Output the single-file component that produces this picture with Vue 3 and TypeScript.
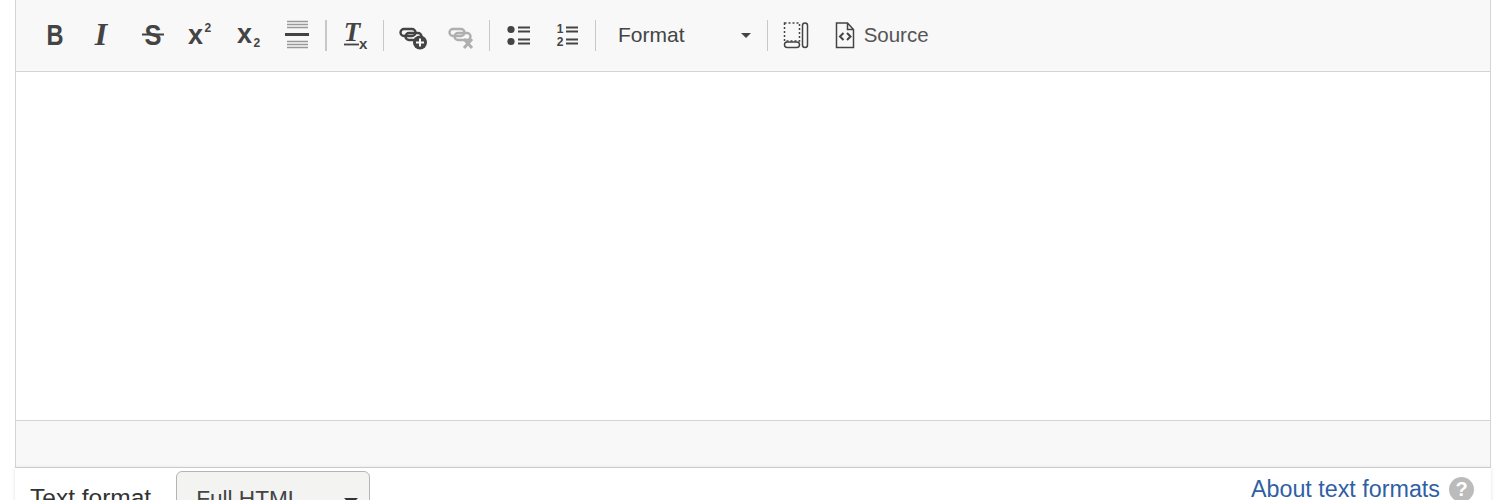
<script setup lang="ts">
const groupOne = ['bold', 'italic', 'strike', 'sup', 'sub', 'hr']
const linkButtons = ['link', 'unlink']
const listButtons = ['ul', 'ol']
</script>

<template>
  <div class="page">
    <div class="editor">
      <div class="toolbar">
        <span v-for="name in groupOne" :key="name" class="btn">
          <svg viewBox="0 0 32 32" class="icon">
            <text v-if="name === 'bold'" x="16" y="25" text-anchor="middle" class="sans heavy" font-size="29" textLength="17" lengthAdjust="spacingAndGlyphs">B</text>
            <text v-if="name === 'italic'" x="13" y="25" text-anchor="middle" class="serif heavy slant" font-size="32">I</text>
            <template v-if="name === 'strike'">
              <text x="17" y="25" text-anchor="middle" class="sans heavy" font-size="29" textLength="17" lengthAdjust="spacingAndGlyphs">S</text>
              <path d="M6 14.5h22" class="line" stroke-width="2" />
            </template>
            <template v-if="name === 'sup'">
              <text x="4" y="23.5" class="sans heavy" font-size="28" textLength="15" lengthAdjust="spacingAndGlyphs">x</text>
              <text x="20.5" y="12" class="sans heavy" font-size="12">2</text>
            </template>
            <template v-if="name === 'sub'">
              <text x="4" y="22.5" class="sans heavy" font-size="28" textLength="15" lengthAdjust="spacingAndGlyphs">x</text>
              <text x="20.5" y="27" class="sans heavy" font-size="12">2</text>
            </template>
            <template v-if="name === 'hr'">
              <path d="M6 1.5h21M6 4.5h21M6 7.5h21M6 21.5h21M6 24.5h21M6 27.5h21" class="thin" />
              <path d="M4 14.5h24" class="line" stroke-width="3" />
            </template>
          </svg>
        </span>
        <span class="sep"></span>
        <span class="btn">
          <svg viewBox="0 0 32 32" class="icon">
            <text x="13" y="20.5" text-anchor="middle" class="serif heavy slant" font-size="27">T</text>
            <path d="M5 24.5h15" class="line" stroke-width="1.8" />
            <text x="20" y="29" class="sans heavy" font-size="15">x</text>
          </svg>
        </span>
        <span class="sep"></span>
        <span v-for="name in linkButtons" :key="name" class="btn">
          <svg viewBox="0 0 32 32" class="icon" :class="{ faded: name === 'unlink' }">
            <rect x="4.5" y="9" width="15" height="7" rx="3.5" class="chain" />
            <rect x="9.5" y="13" width="16" height="7" rx="3.5" class="chain" />
            <template v-if="name === 'link'">
              <circle cx="24" cy="22.5" r="7" class="dot" />
              <path d="M24 18.5v8M20 22.5h8" stroke="#f8f8f8" stroke-width="2" />
            </template>
            <path v-else d="M19 19l8 9M27 19l-8 9" class="line" stroke-width="3" />
          </svg>
        </span>
        <span class="sep"></span>
        <span v-for="name in listButtons" :key="name" class="btn">
          <svg viewBox="0 0 32 32" class="icon">
            <template v-if="name === 'ul'">
              <circle cx="9" cy="9.5" r="3.6" class="dot" />
              <circle cx="9" cy="21.5" r="3.6" class="dot" />
              <path d="M16 7.5h12M16 11.5h12M16 19.5h12M16 23.5h12" class="line" stroke-width="1.8" />
            </template>
            <template v-else>
              <text x="9" y="13" text-anchor="middle" class="sans heavy" font-size="12">1</text>
              <text x="9" y="26" text-anchor="middle" class="sans heavy" font-size="12">2</text>
              <path d="M15 7.5h12M15 11.5h12M15 19.5h12M15 23.5h12" class="line" stroke-width="1.8" />
            </template>
          </svg>
        </span>
        <span class="sep"></span>
        <span class="combo">
          <span>Format</span>
          <span class="caret"></span>
        </span>
        <span class="sep"></span>
        <span class="btn">
          <svg viewBox="0 0 32 32" class="icon">
            <rect x="4.5" y="3" width="15" height="18" fill="none" stroke="#444" stroke-width="1.5" stroke-dasharray="2 2" />
            <rect x="4.5" y="22" width="15" height="5.5" rx="2.7" class="outline" />
            <rect x="22.5" y="3" width="5" height="24.5" rx="2.5" class="outline" />
          </svg>
        </span>
        <span class="btn source">
          <svg viewBox="0 0 32 32" class="icon">
            <path d="M7.5 3h11l6 6.5v18h-17zM18.5 3v6.5h6" class="outline" />
            <path d="M14.5 13l-3.5 3.5 3.5 3.5M18 13l3.5 3.5-3.5 3.5" class="line" stroke-width="2" />
          </svg>
          <span>Source</span>
        </span>
      </div>
      <div class="content"></div>
      <div class="statusbar"></div>
    </div>
    <div class="filter">
      <div class="format">
        <label>Text format</label>
        <div class="select">
          <span>Full HTML</span>
          <span class="select-caret"></span>
        </div>
      </div>
      <div class="help">
        <a href="#">About text formats</a>
        <span class="help-icon">?</span>
      </div>
    </div>
  </div>
</template>

<style scoped>
.page {
  height: 500px;
  overflow: hidden;
  padding: 0 9px 0 15px;
  background: #fff;
  font-family: "Liberation Sans", Arial, sans-serif;
  color: #333;
}

.editor {
  border: solid #d4d4d4;
  border-width: 0 1.5px;
  background: #fff;
}

.toolbar {
  display: flex;
  align-items: center;
  height: 71px;
  padding-left: 15px;
  background: #f8f8f8;
  border-bottom: 1.5px solid #d4d4d4;
}

.btn {
  display: flex;
  flex: none;
  align-items: center;
  justify-content: center;
  width: 48.4px;
}

.icon {
  flex: none;
  width: 32px;
  height: 32px;
  overflow: visible;
}

.faded {
  opacity: 0.4;
}

.sans {
  font-family: "Liberation Sans", Arial, sans-serif;
  fill: #444;
}

.serif {
  font-family: "Liberation Serif", "Times New Roman", serif;
  fill: #444;
}

.heavy {
  font-weight: 700;
}

.slant {
  font-style: italic;
}

.line {
  fill: none;
  stroke: #444;
}

.thin {
  fill: none;
  stroke: #999;
  stroke-width: 1.5;
}

.chain,
.outline {
  fill: none;
  stroke: #444;
  stroke-width: 1.5;
}

.chain {
  stroke-width: 2.4;
}

.dot {
  fill: #444;
}

.sep {
  flex: none;
  width: 1.5px;
  height: 31px;
  margin: 0 3.85px;
  background: #c8c8c8;
}

.combo {
  display: flex;
  flex: none;
  align-items: center;
  width: 163px;
  margin-top: -2px;
  padding-left: 18px;
  box-sizing: border-box;
  font-size: 21px;
  color: #444;
}

.caret {
  width: 0;
  height: 0;
  margin-left: 56px;
  margin-top: 2px;
  border: solid transparent;
  border-width: 5px 5px 0;
  border-top-color: #444;
}

.source {
  width: auto;
  gap: 3px;
  padding-left: 8px;
  font-size: 20.5px;
  color: #555;
}

.source > span {
  margin-top: -2px;
}

.content {
  height: 348px;
  background: #fff;
}

.statusbar {
  height: 46px;
  background: #f8f8f8;
  border-top: 1.5px solid #d4d4d4;
  border-bottom: 1.5px solid #d4d4d4;
}

.filter {
  display: flex;
  justify-content: space-between;
  padding-right: 17px;
  box-shadow: 0 0 4px rgba(0, 0, 0, 0.12);
}

.format {
  display: flex;
  align-items: flex-start;
  gap: 25px;
  padding: 3px 0 0 15px;
}

.format label {
  margin-top: 13px;
  font-size: 24.5px;
  line-height: 28px;
}

.select {
  display: flex;
  align-items: center;
  justify-content: space-between;
  box-sizing: border-box;
  flex: none;
  width: 194px;
  height: 56px;
  padding: 0 11px 0 19px;
  border: 1.5px solid #b5b5b5;
  border-radius: 6px;
  background: #f3f3f1;
  font-size: 22.6px;
  color: #444;
}

.select-caret {
  width: 0;
  height: 0;
  margin-top: 4px;
  border: solid transparent;
  border-width: 7px 7px 0;
  border-top-color: #333;
}

.help {
  display: flex;
  align-items: center;
  gap: 9px;
  height: 28px;
  margin-top: 7px;
}

.help a {
  font-size: 23.3px;
  color: #2f5fa5;
  text-decoration: none;
}

.help-icon {
  display: flex;
  align-items: center;
  justify-content: center;
  width: 25px;
  height: 25px;
  border-radius: 50%;
  background: #bbb;
  color: #fff;
  font-size: 20px;
  font-weight: 700;
}
</style>

<style>
html,
body {
  margin: 0;
  overflow: hidden;
}
</style>
